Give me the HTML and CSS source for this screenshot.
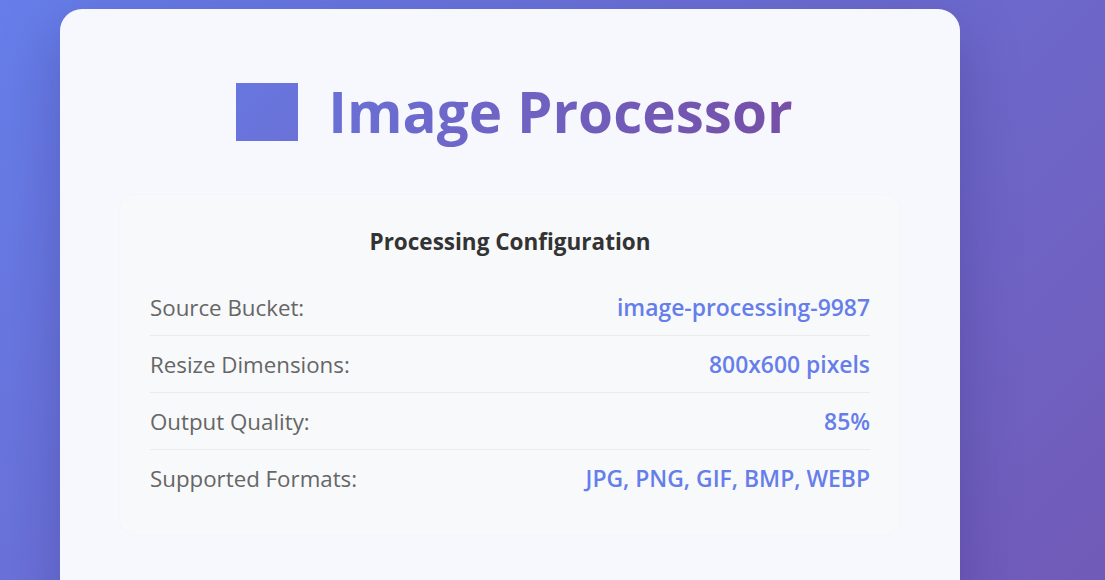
FILE: index.html
```html
<!DOCTYPE html>
<html lang="en">
<head>
<meta charset="utf-8">
<title>Image Processor</title>
<link rel="stylesheet" href="styles.css">
</head>
<body>
<div class="page">
  <main class="card">
    <h1 class="title"><span class="logo"></span><span class="title-text">Image Processor</span></h1>
    <section class="config">
      <h3 class="config-title">Processing Configuration</h3>
      <div class="row"><span class="label">Source Bucket:</span><span class="value">image-processing-9987</span></div>
      <div class="row"><span class="label">Resize Dimensions:</span><span class="value">800x600 pixels</span></div>
      <div class="row"><span class="label">Output Quality:</span><span class="value">85%</span></div>
      <div class="row last"><span class="label">Supported Formats:</span><span class="value">JPG, PNG, GIF, BMP, WEBP</span></div>
    </section>
  </main>
</div>
</body>
</html>
```

FILE: styles.css
```css
html, body {
  margin: 0;
  padding: 0;
}
body {
  background: linear-gradient(135deg, #667eea 0%, #764ba2 100%);
  font-family: "Open Sans", "Noto Sans", sans-serif;
  min-height: 1300px;
}
.page {
  padding: 9px 0 0 60px;
}
.card {
  width: 900px;
  box-sizing: border-box;
  min-height: 1200px;
  background: #f7f8fd;
  border-radius: 22px;
  padding: 68px 60px 60px;
  box-shadow: 0 20px 60px rgba(30, 20, 90, 0.25);
}
.title {
  display: flex;
  justify-content: center;
  align-items: center;
  gap: 30px;
  margin: 0 0 48px;
  padding-left: 9px;
  font-size: 56.6px;
  font-weight: 700;
  line-height: 70px;
}
.logo {
  width: 62px;
  height: 58px;
  background: linear-gradient(135deg, #6777df, #6b72d8);
  flex: none;
}
.title-text {
  background: linear-gradient(90deg, #6a70d6 0%, #764fa6 100%);
  -webkit-background-clip: text;
  background-clip: text;
  color: transparent;
}
.config {
  background: #f8f9fb;
  border-radius: 15px;
  padding: 32px 30px 28px;
  box-shadow: 0 0 0 1px rgba(230, 232, 240, 0.12);
}
.config-title {
  margin: 0 0 22px;
  text-align: center;
  font-size: 22.5px;
  font-weight: 700;
  color: #333;
  line-height: 30px;
}
.row {
  display: flex;
  justify-content: space-between;
  align-items: center;
  height: 56px;
  border-bottom: 1px solid #e9ebef;
  font-size: 22.3px;
}
.row.last {
  border-bottom: none;
}
.label {
  color: #666;
}
.value {
  color: #667eea;
  font-weight: 600;
  font-size: 22.9px;
}
```
